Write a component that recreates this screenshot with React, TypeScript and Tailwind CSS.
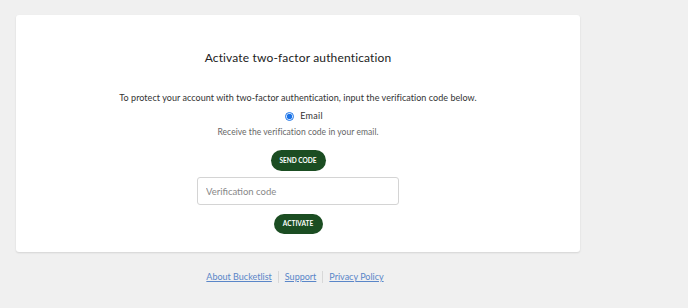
export default function App() {
  return (
    <div className="min-h-[308px] w-[688px] bg-[#f0f0f0] pt-[15px] font-['Lato',sans-serif]">
      <div className="ml-4 flex w-[564px] flex-col items-center rounded-[3px] bg-white pb-[18px] pt-[36px] shadow-[0_1px_2px_rgba(0,0,0,0.12)]">
        <h1 className="text-[12px] leading-[14px] tracking-[0.15px] text-[#222]">
          Activate two-factor authentication
        </h1>

        <p className="mt-[27px] text-[9px] leading-[12px] tracking-[0.05px] text-[#333]">
          To protect your account with two-factor authentication, input the verification code below.
        </p>

        <label className="mt-[5px] flex items-center gap-[6px] pl-[12px] text-[9px] leading-[14px] tracking-[0.3px] text-[#333]">
          <input
            type="radio"
            defaultChecked
            className="m-0 h-[9px] w-[9px] accent-[#1a73e8]"
          />
          Email
        </label>

        <p className="mt-[3px] text-[8.5px] leading-[12px] tracking-[0.05px] text-[#666]">
          Receive the verification code in your email.
        </p>

        <button className="mt-[12px] h-[21px] w-[55px] rounded-full bg-[#1b4d22] text-[6.5px] font-bold text-white">
          SEND CODE
        </button>

        <input
          placeholder="Verification code"
          className="mt-[6px] h-[28px] w-[202px] rounded-[3px] border border-[#d4d4d4] px-[8px] text-[9.5px] text-[#333] outline-none placeholder:text-[#888]"
        />

        <button className="mt-[9px] h-[20px] w-[49px] rounded-full bg-[#1b4d22] text-[6.5px] font-bold text-white">
          ACTIVATE
        </button>
      </div>

      <div className="flex w-[590px] items-center justify-center pt-[19px] text-[9px] leading-[12px]">
        <a href="#" className="text-[#5a86c8] underline">About Bucketlist</a>
        <span className="mx-[6px] h-[12px] w-px bg-[#d8d8d8]" />
        <a href="#" className="text-[#5a86c8] underline">Support</a>
        <span className="mx-[6px] h-[12px] w-px bg-[#d8d8d8]" />
        <a href="#" className="text-[#5a86c8] underline">Privacy Policy</a>
      </div>
    </div>
  );
}
